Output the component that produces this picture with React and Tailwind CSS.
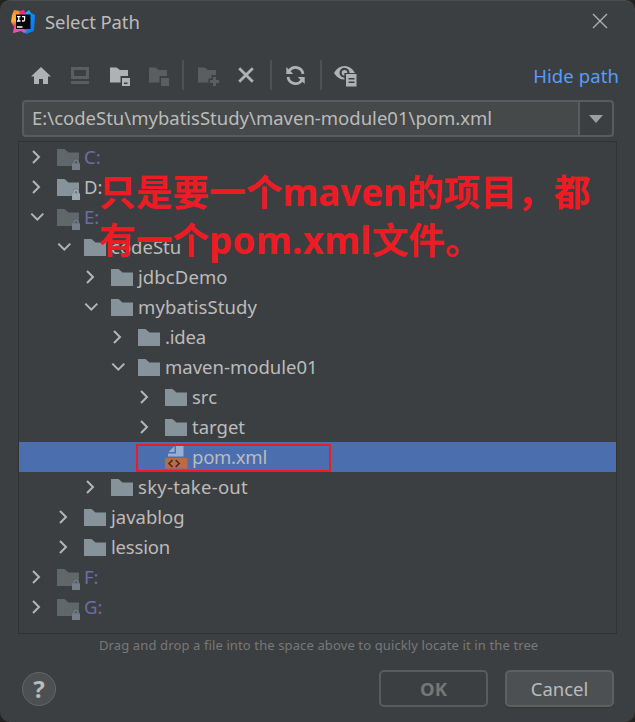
const FOLDER = 'M0 0H7.5L11.5 3.5H22V17H0Z';

function Logo() {
  return (
    <svg width="24" height="24" viewBox="0 0 24 24">
      <defs>
        <linearGradient id="warm" x1="0" y1="0" x2="0" y2="1">
          <stop offset="0" stopColor="#fc8a2a" />
          <stop offset="0.45" stopColor="#fdb62f" />
          <stop offset="0.7" stopColor="#fe315d" />
          <stop offset="1" stopColor="#f9357a" />
        </linearGradient>
        <linearGradient id="cool" x1="0" y1="0" x2="1" y2="1">
          <stop offset="0" stopColor="#3bdcf5" />
          <stop offset="0.5" stopColor="#0a8bfa" />
          <stop offset="1" stopColor="#0b6ff0" />
        </linearGradient>
      </defs>
      <path d="M3 0L9 1L14 5L12 20L2 23L3 17L0 12L1 5Z" fill="url(#warm)" />
      <path d="M13 4L18 0L20 3L24 5L23 21L15 24L10 20Z" fill="url(#cool)" />
      <path d="M2 23L4 16L12 19L16 21L13 23L10 21Z" fill="#e84fc0" />
      <path d="M8 1L13 0L15 4L9 5Z" fill="#f5278e" />
      <path d="M5 4.5H19.5V19H5Z" fill="#080508" />
      <path d="M6 6.6H9.5M7.75 6.6V11M6 11H9.5M11 6.6H13.6V9.8Q13.6 11 12.2 11H11M6 17H11.5" stroke="#fff" strokeWidth="1.3" fill="none" />
    </svg>
  );
}

function HomeIcon() {
  return (
    <svg width="20" height="17" viewBox="0 0 20 17" fill="#afb1b3">
      <path d="M10 0L20 9.5H17V17H12V12H8V17H3V9.5H0Z" />
    </svg>
  );
}

function DesktopIcon() {
  return (
    <svg width="18" height="17" viewBox="0 0 18 17" fill="#5b5d5e">
      <path fillRule="evenodd" d="M0 0H18V12H0ZM3 3V9H15V3ZM0 14H18V17H0Z" />
    </svg>
  );
}

function ProjectFolderIcon() {
  return (
    <svg width="20" height="19" viewBox="0 0 20 19">
      <path d="M0 0.5H6.5L10 3H18V9H10.5V15.5H0Z" fill="#afb1b3" />
      <path fillRule="evenodd" d="M12 11H20V19H12ZM14 15.5V17H17.5V15.5Z" fill="#afb1b3" />
    </svg>
  );
}

function ModuleFolderIcon() {
  return (
    <svg width="20" height="19" viewBox="0 0 20 19" fill="#5b5d5e">
      <path d="M0 0.5H6.5L10 3H18V9H10.5V15.5H0ZM12 11H20V19H12Z" />
    </svg>
  );
}

function NewFolderIcon() {
  return (
    <svg width="21" height="19" viewBox="0 0 21 19" fill="#5b5d5e">
      <path d="M0 0.5H6.5L10 3H18V8H13.5V11.5H10.5V15.5H0Z" />
      <path d="M15 10H18V13H21V16H18V19H15V16H12V13H15Z" />
    </svg>
  );
}

function DeleteIcon() {
  return (
    <svg width="16" height="16" viewBox="0 0 16 16" stroke="#afb1b3" strokeWidth="2.8">
      <path d="M1.2 1.2L14.8 14.8M14.8 1.2L1.2 14.8" />
    </svg>
  );
}

function RefreshIcon() {
  return (
    <svg width="19" height="19" viewBox="0 0 19 19">
      <path d="M3.2 4.8A7.6 7.6 0 0 1 17 8M15.8 14.2A7.6 7.6 0 0 1 2 11" fill="none" stroke="#afb1b3" strokeWidth="2.7" />
      <path d="M0.3 1V8H7.3ZM18.7 18V11H11.7Z" fill="#afb1b3" />
    </svg>
  );
}

function ShowHiddenIcon() {
  return (
    <svg width="23" height="22" viewBox="0 0 23 22">
      <path fillRule="evenodd" fill="#afb1b3" d="M0 8Q4 1 10.5 1Q17 1 21 8H10.5V14.6Q4 14.6 0 8ZM10.5 2.8A5 5 0 0 0 10.5 12.8V8H15.5A5 5 0 0 0 10.5 2.8Z" />
      <path fill="#afb1b3" d="M10.5 5A2.8 2.8 0 1 0 10.5 10.6V8H13.3A2.8 2.8 0 0 0 10.5 5Z" />
      <path d="M10.8 8H23V22H10.8Z" fill="#3c3f41" />
      <path fillRule="evenodd" fill="#afb1b3" d="M12 9H22.5V21.5H12ZM14.5 13V14.5H20.5V13ZM14.5 16.5V18H20.5V16.5Z" />
    </svg>
  );
}

function Chevron({ open }) {
  return open ? (
    <svg width="15" height="14" viewBox="0 0 15 14" fill="none" stroke="#b3b5b6" strokeWidth="2">
      <path d="M2.3 3.6L8.3 9.6L14.3 3.6" />
    </svg>
  ) : (
    <svg width="15" height="14" viewBox="0 0 15 14" fill="none" stroke="#b3b5b6" strokeWidth="2">
      <path d="M4 1L10 7L4 13" />
    </svg>
  );
}

function FolderIcon({ locked, dim }) {
  return (
    <svg className="shrink-0" width="24" height="22" viewBox="0 0 24 22">
      <path d={FOLDER} fill={dim ? '#5f676b' : '#87939a'} />
      {locked && (
        <g>
          <path d="M14.6 14.5H15.8V12.5Q16 9.5 19 9.5Q22 9.5 22 12.5V14.5H23.5V22H14.6Z" fill="#3c3f41" opacity="0.35" />
          <path d="M17 14.5V13.3Q17 11 19 11Q21 11 21 13.3V14.5" fill="none" stroke={dim ? '#747d88' : '#a0adb8'} strokeWidth="1.5" />
          <path d="M15 14.3H23V21H15Z" fill={dim ? '#747d88' : '#9aa7b0'} />
        </g>
      )}
    </svg>
  );
}

function XmlIcon() {
  return (
    <svg className="shrink-0" width="24" height="24" viewBox="0 0 24 24">
      <path d="M3.5 7L9.5 1V7Z" fill="#9aaed0" />
      <path d="M11 1H18.5V11.5H3V8.5H11Z" fill="#9aaed0" />
      <path d="M0 13H22.5V23.7H0Z" fill="#b96b43" />
      <path d="M7.5 15L4 18.5L7.5 22M10.7 15L14.2 18.5L10.7 22" fill="none" stroke="#43271b" strokeWidth="1.5" />
    </svg>
  );
}

const ROWS = [
  { name: 'C:', pad: 'pl-[10px]', locked: true, dim: true },
  { name: 'D:', pad: 'pl-[10px]', locked: true },
  { name: 'E:', pad: 'pl-[10px]', locked: true, dim: true, open: true },
  { name: 'codeStu', pad: 'pl-[37px]', open: true },
  { name: 'jdbcDemo', pad: 'pl-[64px]', tracking: 'tracking-[0.1px]' },
  { name: 'mybatisStudy', pad: 'pl-[64px]', open: true, tracking: 'tracking-[0.1px]' },
  { name: '.idea', pad: 'pl-[91px]', tracking: 'tracking-[-0.2px]' },
  { name: 'maven-module01', pad: 'pl-[91px]', open: true },
  { name: 'src', pad: 'pl-[118px]' },
  { name: 'target', pad: 'pl-[118px]' },
  { name: 'pom.xml', pad: 'pl-[118px]', file: true, tracking: 'tracking-[-0.25px]' },
  { name: 'sky-take-out', pad: 'pl-[64px]', tracking: 'tracking-[0.27px]' },
  { name: 'javablog', pad: 'pl-[37px]' },
  { name: 'lession', pad: 'pl-[37px]', tracking: 'tracking-[-0.2px]' },
  { name: 'F:', pad: 'pl-[10px]', locked: true, dim: true },
  { name: 'G:', pad: 'pl-[10px]', locked: true, dim: true },
];

function TreeRow({ row }) {
  return (
    <div className={`relative flex h-[30px] items-center ${row.pad} ${row.file ? 'bg-[#4b6eaf]' : ''}`}>
      <div className="w-[28px] shrink-0">{!row.file && <Chevron open={row.open} />}</div>
      <div className={`w-[27px] shrink-0 ${row.file ? '' : 'pt-[6px]'}`}>
        {row.file ? <XmlIcon /> : <FolderIcon locked={row.locked} dim={row.dim} />}
      </div>
      <span className={`leading-[30px] ${row.tracking ?? ''} ${row.dim ? 'text-[#6e6ba8]' : 'text-[#bbbbbb]'}`}>{row.name}</span>
      {row.file && <div className="absolute top-[2px] left-[117px] h-[28px] w-[195px] border-2 border-[#ed1c24]" />}
    </div>
  );
}

function Separator() {
  return <div className="h-[30px] w-[2px] bg-[#515151]" />;
}

export default function App() {
  return (
    <div className="h-[722px] w-[635px] bg-[#252321] font-['Noto_Sans','Noto_Sans_CJK_SC',sans-serif] text-[18.5px] text-[#bbbbbb]">
      <div className="relative flex h-[722px] flex-col overflow-hidden rounded-[10px] border-t border-[#4a4d4f] bg-[#3c3f41]">
        <header className="flex h-[42px] shrink-0 items-center pr-[27px] pl-[11px]">
          <Logo />
          <span className="ml-[10px] tracking-[-0.1px]">Select Path</span>
          <svg className="mb-[2px] ml-auto" width="16" height="16" viewBox="0 0 16 16" stroke="#afb1b3" strokeWidth="1.4">
            <path d="M1 1L15 15M15 1L1 15" />
          </svg>
        </header>

        <div className="mt-[16px] flex h-[32px] shrink-0 items-center pr-[16px] pl-[31px]">
          <HomeIcon />
          <div className="ml-[20px]"><DesktopIcon /></div>
          <div className="ml-[21px] pt-[3px]"><ProjectFolderIcon /></div>
          <div className="ml-[19px] pt-[3px]"><ModuleFolderIcon /></div>
          <div className="ml-[13px]"><Separator /></div>
          <div className="ml-[14px] pt-[3px]"><NewFolderIcon /></div>
          <div className="ml-[19px]"><DeleteIcon /></div>
          <div className="ml-[16px]"><Separator /></div>
          <div className="ml-[14px]"><RefreshIcon /></div>
          <div className="ml-[15px]"><Separator /></div>
          <div className="ml-[12px] pt-[2px]"><ShowHiddenIcon /></div>
          <span className="mt-[2px] ml-auto tracking-[0.1px] text-[#589df6]">Hide path</span>
        </div>

        <div className="mt-[9px] ml-[22px] flex h-[37px] w-[592px] shrink-0 rounded-[4px] border-2 border-[#595c5d] bg-[#45494a]">
          <span className="flex-1 pl-[8px] leading-[32px]">E:\codeStu\mybatisStudy\maven-module01\pom.xml</span>
          <div className="flex w-[34px] items-center justify-center rounded-r-[3px] border-l-2 border-[#595c5d] bg-[#3c3f41]">
            <svg width="14" height="8" viewBox="0 0 14 8"><path d="M0 0H14L7 8Z" fill="#9c9fa1" /></svg>
          </div>
        </div>

        <div className="mt-[4px] ml-[18px] h-[493px] w-[599px] shrink-0 border border-[#323232]">
          {ROWS.map((row) => <TreeRow key={row.name} row={row} />)}
        </div>

        <p className="h-[22px] shrink-0 pl-[99px] text-[13px] leading-[22px] tracking-[0.12px] whitespace-nowrap text-[#787878]">
          Drag and drop a file into the space above to quickly locate it in the tree
        </p>

        <footer className="mt-[14px] flex items-center pr-[21px] pl-[22px]">
          <div className="flex h-[34px] w-[34px] items-center justify-center rounded-full border border-[#646667] bg-[#4c5052] text-[24px] font-bold leading-none">?</div>
          <div className="ml-auto flex h-[37px] w-[109px] items-center justify-center rounded-[5px] border-2 border-[#595c5c] font-bold text-[#777777]">OK</div>
          <div className="ml-[17px] flex h-[37px] w-[109px] items-center justify-center rounded-[5px] border-2 border-[#5e6060] bg-[#4c5052] shadow-[0_1px_1px_#333638]">Cancel</div>
        </footer>

        <div className="absolute top-[167px] left-[99px] text-[36.7px] leading-[48px] font-bold whitespace-nowrap text-[#ed1c24]">
          <div>只是要一个<span>maven</span>的项目，都</div>
          <div>有一个<span className="tracking-[0.35px]">pom.xml</span>文件。</div>
        </div>
      </div>
    </div>
  );
}
